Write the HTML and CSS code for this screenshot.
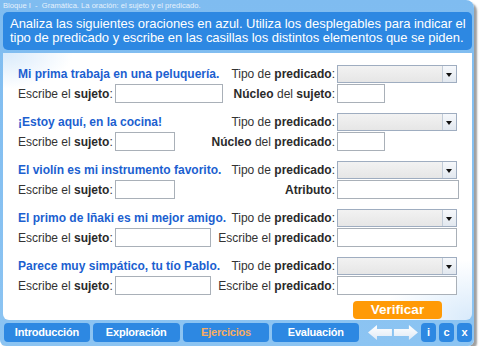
FILE: index.html
```html
<!DOCTYPE html>
<html lang="es">
<head>
<meta charset="utf-8">
<title>Bloque I - Gramática</title>
<link rel="stylesheet" href="styles.css">
</head>
<body>
<div class="frame">
  <div class="title">Bloque I&nbsp; -&nbsp; Gramática. La oración: el sujeto y el predicado.</div>
  <div class="instr">Analiza las siguientes oraciones en azul. Utiliza los desplegables para indicar el tipo de predicado y escribe en las casillas los distintos elementos que se piden.</div>
  <div class="panel">
    <div class="block">
      <div class="line">
        <span class="sent">Mi prima trabaja en una peluquería.</span>
        <span class="lab"><span>Tipo de <b>predicado</b>:</span></span>
        <div class="select"><span class="btn"></span></div>
      </div>
      <div class="line">
        <span class="left"><span>Escribe el <b>sujeto</b>:</span><span class="input w108"></span></span>
        <span class="lab"><span><b>Núcleo</b> del <b>sujeto</b>:</span></span>
        <span class="input w48"></span>
      </div>
    </div>
    <div class="block">
      <div class="line">
        <span class="sent">¡Estoy aquí, en la cocina!</span>
        <span class="lab"><span>Tipo de <b>predicado</b>:</span></span>
        <div class="select"><span class="btn"></span></div>
      </div>
      <div class="line">
        <span class="left"><span>Escribe el <b>sujeto</b>:</span><span class="input w60"></span></span>
        <span class="lab"><span><b>Núcleo</b> del <b>predicado</b>:</span></span>
        <span class="input w48"></span>
      </div>
    </div>
    <div class="block">
      <div class="line">
        <span class="sent">El violín es mi instrumento favorito.</span>
        <span class="lab"><span>Tipo de <b>predicado</b>:</span></span>
        <div class="select"><span class="btn"></span></div>
      </div>
      <div class="line">
        <span class="left"><span>Escribe el <b>sujeto</b>:</span><span class="input w60"></span></span>
        <span class="lab"><span><b>Atributo</b>:</span></span>
        <span class="input w122"></span>
      </div>
    </div>
    <div class="block">
      <div class="line">
        <span class="sent">El primo de Iñaki es mi mejor amigo.</span>
        <span class="lab"><span>Tipo de <b>predicado</b>:</span></span>
        <div class="select"><span class="btn"></span></div>
      </div>
      <div class="line">
        <span class="left"><span>Escribe el <b>sujeto</b>:</span><span class="input w96"></span></span>
        <span class="lab"><span>Escribe el <b>predicado</b>:</span></span>
        <span class="input w120"></span>
      </div>
    </div>
    <div class="block">
      <div class="line">
        <span class="sent">Parece muy simpático, tu tío Pablo.</span>
        <span class="lab"><span>Tipo de <b>predicado</b>:</span></span>
        <div class="select"><span class="btn"></span></div>
      </div>
      <div class="line">
        <span class="left"><span>Escribe el <b>sujeto</b>:</span><span class="input w96"></span></span>
        <span class="lab"><span>Escribe el <b>predicado</b>:</span></span>
        <span class="input w120"></span>
      </div>
    </div>
    <div class="actions"><span class="verify">Verificar</span></div>
  </div>
  <div class="nav">
    <span class="tab">Introducción</span>
    <span class="tab">Exploración</span>
    <span class="tab active">Ejercicios</span>
    <span class="tab">Evaluación</span>
    <svg class="arrows" width="50" height="15" viewBox="0 0 50 15">
      <defs>
        <linearGradient id="ag" x1="0" y1="0" x2="0" y2="1">
          <stop offset="0" stop-color="#ffffff"/>
          <stop offset="1" stop-color="#dfe9f5"/>
        </linearGradient>
      </defs>
      <polygon points="0,7.5 9,0 9,4 24,4 24,11 9,11 9,15" fill="url(#ag)"/>
      <polygon points="50,7.5 41,0 41,4 26,4 26,11 41,11 41,15" fill="url(#ag)"/>
    </svg>
    <span class="sq">i</span>
    <span class="sq">c</span>
    <span class="sq">x</span>
  </div>
</div>
</body>
</html>
```
FILE: styles.css
```css
* { box-sizing: border-box; }
html, body { margin: 0; padding: 0; background: #fff; }
body { font-family: "Liberation Sans", Arial, sans-serif; }

.frame {
  width: 474px;
  height: 346px;
  background: linear-gradient(#7fbcf0, #8cc4f2);
  border-radius: 0 8px 6px 6px;
  box-shadow: 3px 3px 2px rgba(80, 80, 80, 0.55);
  padding: 0 2px 0 3px;
  display: flex;
  flex-direction: column;
}

.title {
  height: 12px;
  font-size: 7.6px;
  line-height: 11px;
  color: #e6f1fc;
  white-space: nowrap;
}

.instr {
  height: 38px;
  background: #2d88e2;
  border-radius: 5px;
  color: #fff;
  font-size: 13px;
  letter-spacing: -0.04px;
  line-height: 14px;
  padding: 5px 2px 0 7px;
}

.panel {
  margin-top: 3px;
  height: 267px;
  background:
    radial-gradient(70px 36px at 0 0, #d8eafb 0, rgba(255,255,255,0) 100%),
    radial-gradient(90px 60px at 100% 100%, #d8eafb 0, rgba(255,255,255,0) 100%),
    #fff;
  border-radius: 0 0 6px 6px;
  padding: 12px 0 0 15px;
  display: flex;
  flex-direction: column;
  gap: 10px;
  font-size: 12px;
  color: #333;
}

.block { display: flex; flex-direction: column; gap: 1px; }

.line {
  display: grid;
  grid-template-columns: 213px 106px 1fr;
  align-items: center;
  height: 18px;
}
.line + .line { height: 19px; }

.sent {
  font-weight: bold;
  color: #1c5fd0;
  white-space: nowrap;
}

.left {
  display: flex;
  align-items: center;
  gap: 2px;
  white-space: nowrap;
}

.lab {
  display: flex;
  justify-content: flex-end;
  white-space: nowrap;
  padding-right: 2px;
}
b { font-weight: bold; color: #2a2a2a; }

.input {
  display: block;
  height: 19px;
  background: #fff;
  border: 1px solid #a9b0b8;
}
.w48 { width: 48px; }
.w60 { width: 60px; }
.w96 { width: 96px; }
.w108 { width: 108px; }
.w120 { width: 120px; }
.w122 { width: 122px; }

.select {
  width: 120px;
  height: 18px;
  border: 1px solid #9fadc0;
  background: linear-gradient(#f2f2f2, #e6e6e6);
  display: flex;
  justify-content: flex-end;
}
.select .btn {
  width: 14px;
  height: 100%;
  border-left: 1px solid #c2ccd8;
  background: linear-gradient(#f6f8fb, #e2e8ef);
  position: relative;
}
.select .btn::after {
  content: "";
  position: absolute;
  left: 3px;
  top: 7px;
  border-left: 3.5px solid transparent;
  border-right: 3.5px solid transparent;
  border-top: 4px solid #111;
}

.actions {
  display: flex;
  padding-left: 335px;
  margin-top: -4px;
}
.verify {
  width: 89px;
  height: 18px;
  background: #ff9a06;
  border-radius: 4px;
  color: #fff;
  font-weight: bold;
  font-size: 13.5px;
  line-height: 18px;
  text-align: center;
}

.nav {
  margin-top: 3px;
  height: 19px;
  display: flex;
  align-items: center;
  gap: 3px;
  padding-left: 1px;
}
.tab {
  width: 87px;
  height: 19px;
  background: #2d88e2;
  border-radius: 4px;
  color: #fff;
  font-size: 11px;
  font-weight: bold;
  letter-spacing: -0.2px;
  line-height: 19px;
  text-align: center;
}
.tab:first-child { width: 86px; }
.tab.active { color: #f7ad62; }
.arrows { margin: 0 0 0 6px; }
.sq {
  width: 15px;
  height: 19px;
  background: #2d88e2;
  border-radius: 4px;
  color: #fff;
  font-size: 11px;
  font-weight: bold;
  line-height: 19px;
  text-align: center;
}
```
